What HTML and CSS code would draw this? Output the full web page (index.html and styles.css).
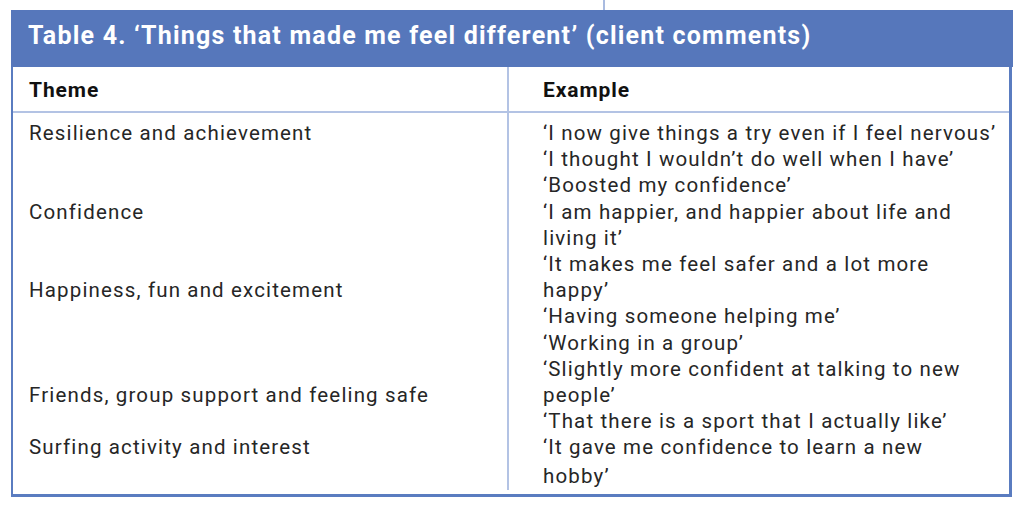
FILE: index.html
```html
<!DOCTYPE html>
<html lang="en">
<head>
<meta charset="utf-8">
<title>Table 4</title>
<link rel="stylesheet" href="styles.css">
</head>
<body>
<div class="tick"></div>
<div class="table">
  <div class="title">Table 4. ‘Things that made me feel different’ (client comments)</div>
  <div class="frame">
    <div class="row head">
      <div class="cell left">Theme</div>
      <div class="cell right">Example</div>
    </div>
    <div class="row content">
      <div class="cell left">
        <div class="line">Resilience and achievement</div>
        <div class="line skip2">Confidence</div>
        <div class="line skip2">Happiness, fun and excitement</div>
        <div class="line skip3">Friends, group support and feeling safe</div>
        <div class="line skip1">Surfing activity and interest</div>
      </div>
      <div class="cell right">
        <div class="line">‘I now give things a try even if I feel nervous’</div>
        <div class="line">‘I thought I wouldn’t do well when I have’</div>
        <div class="line">‘Boosted my confidence’</div>
        <div class="line">‘I am happier, and happier about life and</div>
        <div class="line">living it’</div>
        <div class="line">‘It makes me feel safer and a lot more</div>
        <div class="line">happy’</div>
        <div class="line">‘Having someone helping me’</div>
        <div class="line">‘Working in a group’</div>
        <div class="line">‘Slightly more confident at talking to new</div>
        <div class="line">people’</div>
        <div class="line">‘That there is a sport that I actually like’</div>
        <div class="line">‘It gave me confidence to learn a new</div>
        <div class="line last">hobby’</div>
      </div>
    </div>
  </div>
</div>
</body>
</html>
```

FILE: styles.css
```css
html, body {
  margin: 0;
  padding: 0;
  background: #ffffff;
}
body {
  font-family: Roboto, "Liberation Sans", sans-serif;
  color: #262626;
}
.tick {
  width: 2px;
  height: 10px;
  margin-left: 603px;
  background: #a9bbe0;
}
.table {
  margin-left: 11px;
  width: 1002px;
}
.title {
  height: 57px;
  line-height: 51px;
  background: #5677bb;
  color: #ffffff;
  font-weight: 700;
  font-size: 25px;
  padding-left: 17px;
  letter-spacing: 1.2px;
}
.frame {
  border-left: 2px solid #5a7cc0;
  border-right: 3px solid #5a7cc0;
  border-bottom: 3px solid #5a7cc0;
  margin-right: 1px;
}
.row {
  display: grid;
  grid-template-columns: 496px 1fr;
}
.head {
  height: 44px;
  border-bottom: 2px solid #b3c3e4;
  font-weight: 700;
  font-size: 21px;
  letter-spacing: 0.9px;
  color: #111111;
}
.head .cell {
  line-height: 46px;
}
.cell.left {
  padding-left: 16px;
  border-right: 2px solid #b3c3e4;
}
.cell.right {
  padding-left: 34px;
}
.content {
  font-size: 20.5px;
  letter-spacing: 1.15px;
  padding-bottom: 4px;
}
.content .cell {
  padding-top: 7px;
}
.line {
  line-height: 26.2px;
  height: 26.2px;
  white-space: nowrap;
}
.line.last {
  margin-top: 3px;
}
.skip1 { margin-top: 26.2px; }
.skip2 { margin-top: 52.4px; }
.skip3 { margin-top: 78.6px; }
```
